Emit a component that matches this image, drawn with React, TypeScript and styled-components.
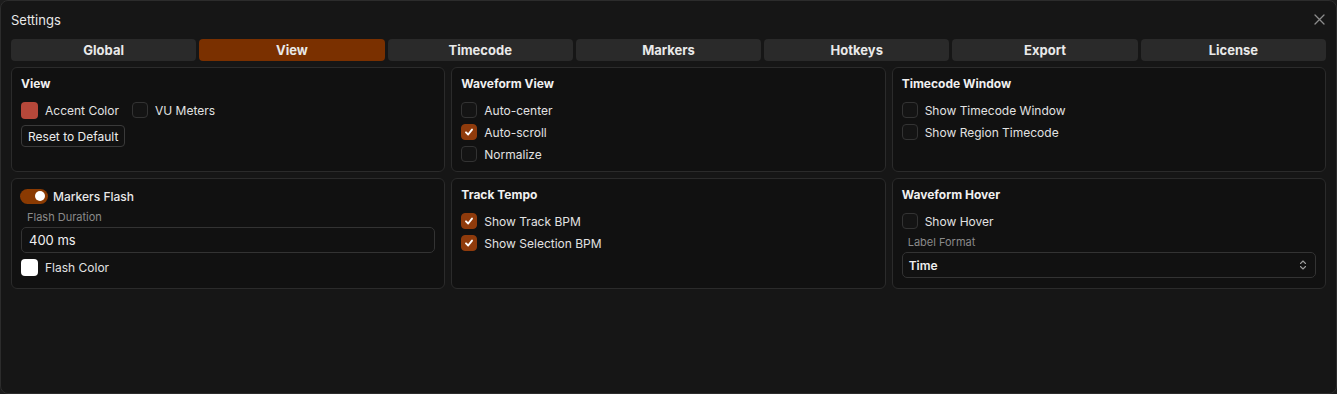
import React from "react";
import styled, { createGlobalStyle } from "styled-components";

const Global = createGlobalStyle`
  html, body { margin: 0; padding: 0; background: #1c1c1c; }
  body { font-family: Inter, "Noto Sans", sans-serif; color: #e6e6e6; }
  * { box-sizing: border-box; }
`;

const Frame = styled.div`
  width: 1337px;
  height: 394px;
  background: #161616;
  border: 1px solid #2c2c2c;
  border-radius: 8px;
  padding: 0 10px;
  display: flex;
  flex-direction: column;
  overflow: hidden;
`;

const Header = styled.div`
  height: 37px;
  display: flex;
  align-items: center;
  justify-content: space-between;
`;

const Title = styled.div`
  font-size: 13px;
  color: #e8e8e8;
`;

const Close = styled.button`
  width: 16px;
  height: 16px;
  padding: 0;
  margin-right: -1px;
  border: none;
  background: transparent;
  display: flex;
  align-items: center;
  justify-content: center;
`;

const Tabs = styled.div`
  display: grid;
  grid-template-columns: repeat(7, 1fr);
  gap: 3px;
  height: 22px;
  margin-top: 1px;
`;

const Tab = styled.div<{ $active?: boolean }>`
  border-radius: 4px;
  background: ${(p) => (p.$active ? "#7a3000" : "#2a2a2a")};
  color: #e9e9e9;
  font-size: 13px;
  font-weight: 700;
  display: flex;
  align-items: center;
  justify-content: center;
`;

const Grid = styled.div`
  margin-top: 6px;
  display: grid;
  grid-template-columns: repeat(3, 1fr);
  gap: 6px;
`;

const Card = styled.div<{ $pb?: number }>`
  background: #111111;
  border: 1px solid #2b2b2b;
  border-radius: 6px;
  padding: 8px 9px ${(p) => p.$pb ?? 6}px;
  display: flex;
  flex-direction: column;
`;

const CardTitle = styled.div`
  font-size: 12px;
  font-weight: 700;
  line-height: 16px;
  color: #f0f0f0;
  margin-bottom: 7px;
`;

const Rows = styled.div`
  display: flex;
  flex-direction: column;
`;

const Row = styled.div`
  height: 22px;
  display: flex;
  align-items: center;
  gap: 7px;
  font-size: 12px;
  color: #e2e2e2;
`;

const InlineRow = styled.div`
  display: flex;
  align-items: center;
  gap: 13px;
`;

const Item = styled.div`
  display: flex;
  align-items: center;
  gap: 7px;
  font-size: 12px;
  color: #e2e2e2;
`;

const Box = styled.div<{ $checked?: boolean }>`
  width: 16px;
  height: 16px;
  border-radius: 4px;
  border: 1px solid ${(p) => (p.$checked ? "#8f3b0c" : "#333333")};
  background: ${(p) => (p.$checked ? "#8f3b0c" : "#141414")};
  display: flex;
  align-items: center;
  justify-content: center;
  flex-shrink: 0;
`;

const Swatch = styled.div<{ $color: string }>`
  width: 17px;
  height: 17px;
  border-radius: 4px;
  background: ${(p) => p.$color};
  flex-shrink: 0;
`;

const ResetButton = styled.button`
  margin-top: 4px;
  align-self: flex-start;
  height: 22px;
  padding: 0 6px;
  border: 1px solid #3a3a3a;
  border-radius: 4px;
  background: #111;
  color: #ececec;
  font-family: inherit;
  font-size: 12px;
`;

const ToggleRow = styled.div`
  height: 18px;
  display: flex;
  align-items: center;
  gap: 5px;
  font-size: 12px;
  font-weight: 500;
  color: #e8e8e8;
  margin-left: -1px;
`;

const Toggle = styled.div`
  width: 28px;
  height: 15px;
  border-radius: 8px;
  background: #8a3a02;
  display: flex;
  align-items: center;
  justify-content: flex-end;
  padding-right: 3px;
`;

const Knob = styled.div`
  width: 10px;
  height: 10px;
  border-radius: 50%;
  background: #fff;
`;

const FieldLabel = styled.div<{ $mt?: number }>`
  font-size: 11px;
  color: #8a8a8a;
  line-height: 14px;
  padding-left: 6px;
  margin-top: ${(p) => p.$mt ?? 5}px;
`;

const Input = styled.div<{ $mt?: number }>`
  margin-top: ${(p) => p.$mt ?? 4}px;
  height: 26px;
  border: 1px solid #333;
  border-radius: 5px;
  background: #111;
  display: flex;
  align-items: center;
  padding: 0 7px;
  font-size: 13px;
  color: #f0f0f0;
`;

const Select = styled(Input)`
  justify-content: space-between;
  font-size: 12px;
  font-weight: 600;
  color: #eeeeee;
  padding: 0 8px 0 6px;
`;

const SwatchRow = styled(Item)`
  margin-top: 5px;
  height: 19px;
`;

const Check = () => (
  <svg width="10" height="10" viewBox="0 0 10 10">
    <path d="M2 5.3 L4.2 7.5 L8 2.6" fill="none" stroke="#fff" strokeWidth="1.9" strokeLinecap="round" strokeLinejoin="round" />
  </svg>
);

const CheckRow = ({ label, checked }: { label: string; checked?: boolean }) => (
  <Row>
    <Box $checked={checked}>{checked && <Check />}</Box>
    {label}
  </Row>
);

const tabs = ["Global", "View", "Timecode", "Markers", "Hotkeys", "Export", "License"];

export default function App() {
  return (
    <>
      <Global />
      <Frame>
        <Header>
          <Title>Settings</Title>
          <Close aria-label="close">
            <svg width="11" height="11" viewBox="0 0 11 11">
              <path d="M1 1 L10 10 M10 1 L1 10" stroke="#8c8c8c" strokeWidth="1.3" strokeLinecap="round" />
            </svg>
          </Close>
        </Header>
        <Tabs>
          {tabs.map((t) => (
            <Tab key={t} $active={t === "View"}>
              {t}
            </Tab>
          ))}
        </Tabs>
        <Grid>
          <Card>
            <CardTitle>View</CardTitle>
            <Row>
              <InlineRow>
                <Item>
                  <Swatch $color="#b6483a" />
                  Accent Color
                </Item>
                <Item>
                  <Box />
                  VU Meters
                </Item>
              </InlineRow>
            </Row>
            <ResetButton>Reset to Default</ResetButton>
          </Card>
          <Card>
            <CardTitle>Waveform View</CardTitle>
            <Rows>
              <CheckRow label="Auto-center" />
              <CheckRow label="Auto-scroll" checked />
              <CheckRow label="Normalize" />
            </Rows>
          </Card>
          <Card>
            <CardTitle>Timecode Window</CardTitle>
            <Rows>
              <CheckRow label="Show Timecode Window" />
              <CheckRow label="Show Region Timecode" />
            </Rows>
          </Card>
          <Card $pb={11}>
            <ToggleRow>
              <Toggle>
                <Knob />
              </Toggle>
              Markers Flash
            </ToggleRow>
            <FieldLabel>Flash Duration</FieldLabel>
            <Input $mt={3}>400 ms</Input>
            <SwatchRow>
              <Swatch $color="#ffffff" />
              Flash Color
            </SwatchRow>
          </Card>
          <Card>
            <CardTitle>Track Tempo</CardTitle>
            <Rows>
              <CheckRow label="Show Track BPM" checked />
              <CheckRow label="Show Selection BPM" checked />
            </Rows>
          </Card>
          <Card>
            <CardTitle>Waveform Hover</CardTitle>
            <Rows>
              <CheckRow label="Show Hover" />
            </Rows>
            <FieldLabel $mt={3}>Label Format</FieldLabel>
            <Select $mt={3}>
              Time
              <svg width="8" height="12" viewBox="0 0 8 12">
                <path d="M1.5 4.5 L4 2 L6.5 4.5 M1.5 7.5 L4 10 L6.5 7.5" fill="none" stroke="#9a9a9a" strokeWidth="1.1" strokeLinecap="round" strokeLinejoin="round" />
              </svg>
            </Select>
          </Card>
        </Grid>
      </Frame>
    </>
  );
}
